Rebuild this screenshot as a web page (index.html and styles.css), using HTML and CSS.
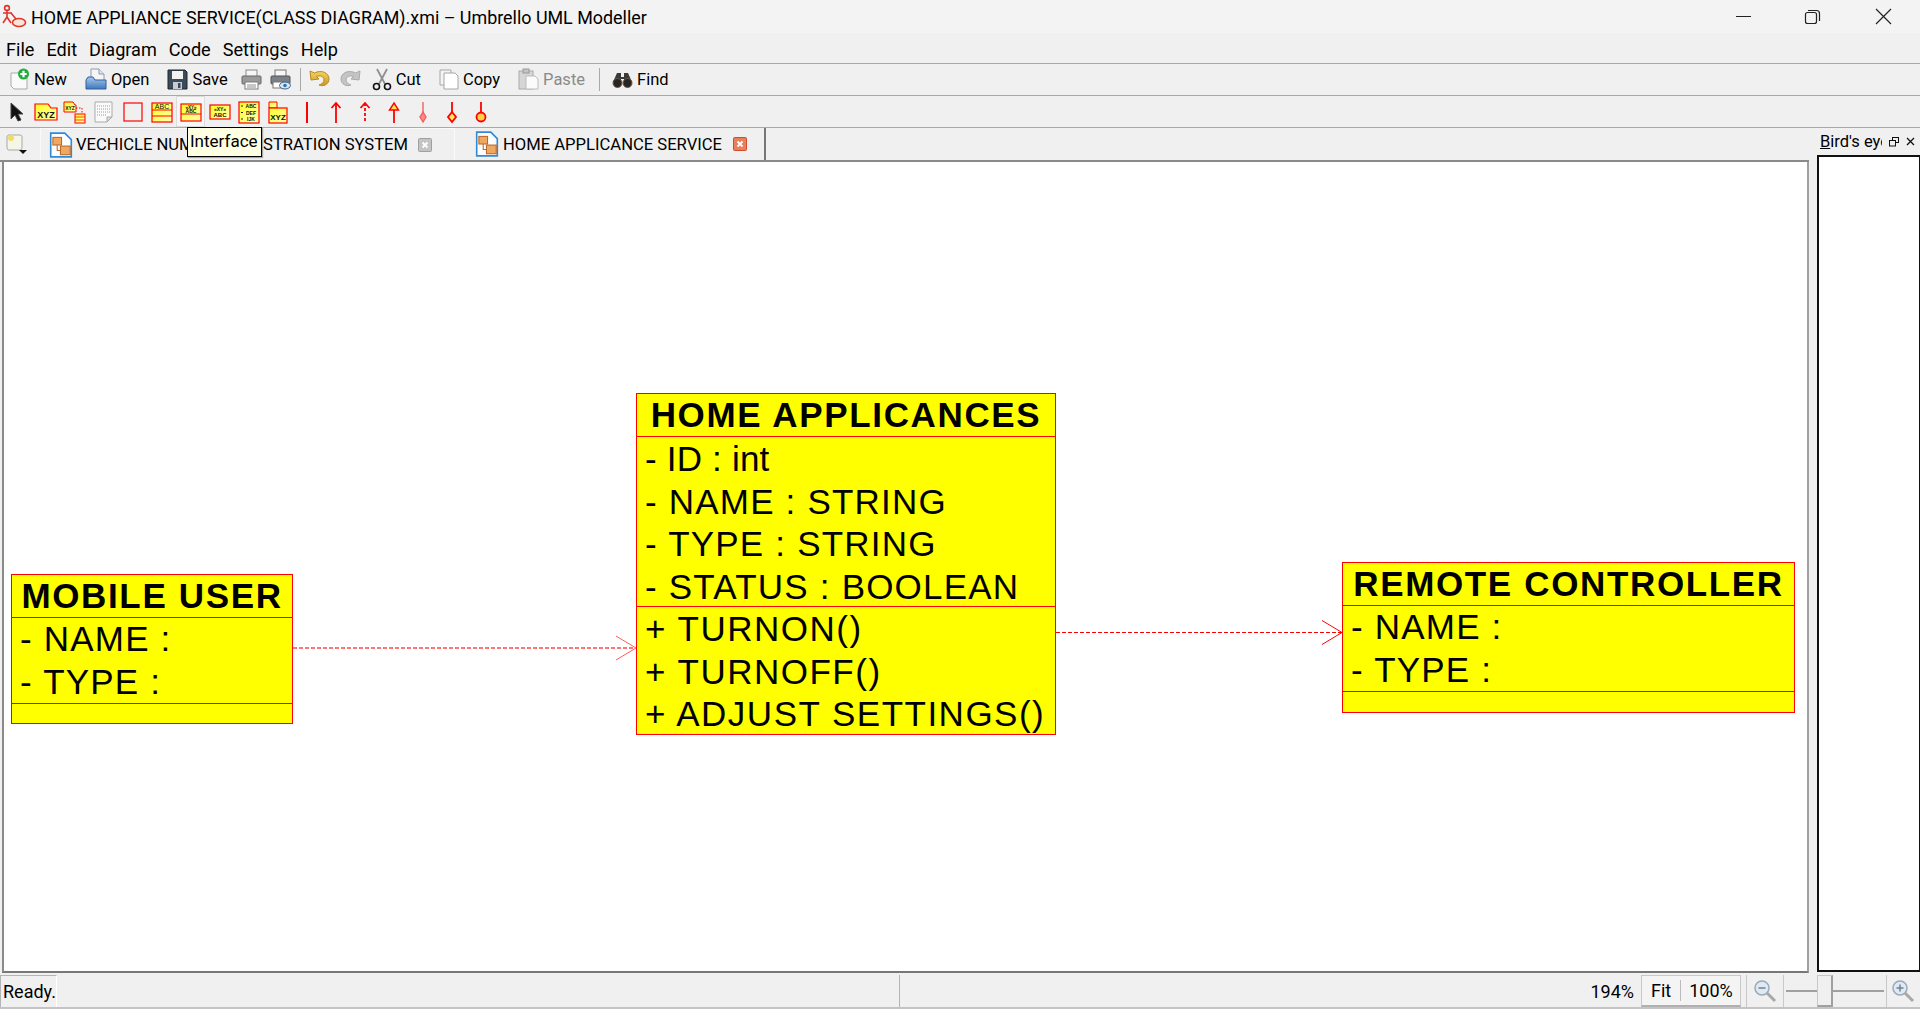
FILE: index.html
```html
<!DOCTYPE html>
<html lang="en">
<head>
  <meta charset="UTF-8">
  <title>HOME APPLIANCE SERVICE(CLASS DIAGRAM).xmi – Umbrello UML Modeller</title>
  <link rel="stylesheet" href="styles.css">
</head>
<body>

<svg class="defs" width="0" height="0">
  <defs>
    <linearGradient id="note" x1="0" y1="0" x2="1" y2="1">
      <stop offset="0" stop-color="#ffff20"/>
      <stop offset="1" stop-color="#ffffb0"/>
    </linearGradient>
    <linearGradient id="blue" x1="0" y1="0" x2="0" y2="1">
      <stop offset="0" stop-color="#a8c8ee"/>
      <stop offset="1" stop-color="#3f78bd"/>
    </linearGradient>
    <linearGradient id="gold" x1="0" y1="0" x2="0" y2="1">
      <stop offset="0" stop-color="#f6d65a"/>
      <stop offset="1" stop-color="#c9952a"/>
    </linearGradient>
  </defs>
</svg>

<div class="app">

  <div class="titlebar">
    <svg class="logo" width="26" height="26" viewBox="0 0 26 26" fill="none" stroke="#e0352b" stroke-width="1.6">
      <circle cx="6" cy="4" r="2.4"/>
      <path d="M6 6.5V13M2 9H11M6 13L2 19M6 13L10 19"/>
      <path d="M10 9L15 15"/>
      <ellipse cx="18" cy="18.500" rx="6.500" ry="4" fill="#fbe3d8"/>
    </svg>
    <span class="title">HOME APPLIANCE SERVICE(CLASS DIAGRAM).xmi – Umbrello UML Modeller</span>
    <div class="winbtns">
      <svg width="70" height="33" viewBox="0 0 70 33" stroke="#222" fill="none"><path d="M27 16.500H42"/></svg>
      <svg width="70" height="33" viewBox="0 0 70 33" stroke="#222" fill="none" stroke-width="1.2"><rect x="26.500" y="12.500" width="11" height="11" rx="2"/><path d="M29 10.500H37.500Q40.500 10.500 40.500 13.500V21"/></svg>
      <svg width="70" height="33" viewBox="0 0 70 33" stroke="#222" fill="none" stroke-width="1.2"><path d="M27 9L42 24M42 9L27 24"/></svg>
    </div>
  </div>

  <div class="menubar">
    <span>File</span><span>Edit</span><span>Diagram</span><span>Code</span><span>Settings</span><span>Help</span>
  </div>

  <!-- main toolbar -->
  <div class="toolbar">
    <div class="tool">
      <svg width="21" height="23" viewBox="0 0 21 23"><path d="M2 5H13L18 10V21H5L2 18Z" fill="#fafafa" stroke="#a9a9a9"/><circle cx="14.500" cy="6" r="5.500" fill="#1fae3a"/><path d="M14.500 2.800V9.200M11.300 6H17.700" stroke="#fff" stroke-width="2.200"/></svg>
      <span>New</span>
    </div>
    <div class="tool">
      <svg width="22" height="23" viewBox="0 0 22 23"><path d="M6 1H14L19 6V14H6Z" fill="#f5f5f5" stroke="#8c9bb0"/><path d="M14 1V6H19" fill="#dde3ea" stroke="#8c9bb0"/><path d="M1 12L3 9H8L10 12H21V21H1Z" fill="url(#blue)" stroke="#2f5f9c"/></svg>
      <span>Open</span>
    </div>
    <div class="tool">
      <svg width="21" height="23" viewBox="0 0 21 23"><path d="M1 2H18L20 4V21H1Z" fill="#3d4a5a" stroke="#1f2630"/><rect x="5" y="3" width="11" height="8" fill="#f2f2f2"/><rect x="6" y="14" width="9" height="7" fill="#c8ccd2"/><rect x="11" y="15" width="2.500" height="5" fill="#3d4a5a"/></svg>
      <span>Save</span>
    </div>
    <div class="tool icon-only">
      <svg width="21" height="23" viewBox="0 0 21 23"><rect x="5" y="2" width="11" height="7" fill="#f6f6f6" stroke="#8a8a8a"/><rect x="1" y="8" width="19" height="8" rx="1" fill="#9a9a9a" stroke="#666"/><rect x="4" y="14" width="13" height="7" fill="#fff" stroke="#7c7c7c"/><path d="M6 17H15M6 19H15" stroke="#8f8f8f"/></svg>
    </div>
    <div class="tool icon-only">
      <svg width="21" height="23" viewBox="0 0 21 23"><rect x="5" y="2" width="11" height="7" fill="#f6f6f6" stroke="#777"/><rect x="1" y="8" width="19" height="8" rx="1" fill="#7a8087" stroke="#555"/><rect x="3" y="14" width="11" height="6" fill="#fff" stroke="#777"/><ellipse cx="15" cy="17.500" rx="5.500" ry="3.500" fill="#d5e6f5" stroke="#41658a"/><circle cx="15" cy="17.500" r="1.800" fill="#2f74b5"/></svg>
    </div>
    <div class="sep"></div>
    <div class="tool icon-only">
      <svg width="22" height="23" viewBox="0 0 22 23"><path d="M1 3L2 12L10 11L7.500 8.500C11 7 15 8.500 15 12C15 14.500 13 16 10 17C14 19 20 16.500 20 11C20 4.500 12 1.500 5.500 5Z" fill="url(#gold)" stroke="#b88a1e"/></svg>
    </div>
    <div class="tool icon-only">
      <svg width="22" height="23" viewBox="0 0 22 23"><path d="M21 3L20 12L12 11L14.500 8.500C11 7 7 8.500 7 12C7 14.500 9 16 12 17C8 19 2 16.500 2 11C2 4.500 10 1.500 16.500 5Z" fill="#c4c4c4" stroke="#aaa"/></svg>
    </div>
    <div class="tool cut">
      <svg width="20" height="23" viewBox="0 0 20 23" fill="none"><path d="M5 1L13 16M15 1L7 16" stroke="#8f8f8f" stroke-width="1.800"/><circle cx="4.500" cy="18.500" r="3" stroke="#111" stroke-width="1.600"/><circle cx="15.500" cy="18.500" r="3" stroke="#111" stroke-width="1.600"/></svg>
      <span>Cut</span>
    </div>
    <div class="tool">
      <svg width="20" height="23" viewBox="0 0 20 23"><path d="M1 2H12V17H1Z" fill="#f4f4f4" stroke="#a6a6a6"/><path d="M5 5H16L19 8V21H5Z" fill="#fff" stroke="#a6a6a6"/></svg>
      <span>Copy</span>
    </div>
    <div class="tool disabled">
      <svg width="21" height="23" viewBox="0 0 21 23"><rect x="1" y="3" width="14" height="18" fill="#d6d6d6" stroke="#aaa"/><rect x="5" y="1" width="6" height="4" fill="#c4c4c4" stroke="#999"/><path d="M8 8H17L20 11V21H8Z" fill="#fbfbfb" stroke="#bbb"/></svg>
      <span>Paste</span>
    </div>
    <div class="sep"></div>
    <div class="tool find">
      <svg width="21" height="23" viewBox="0 0 21 23"><path d="M5 5H9V9H12V5H16L20 14L12 15V11H9V15L1 14Z" fill="#3a3a3a"/><circle cx="5.500" cy="15" r="4.500" fill="#2a2420" stroke="#6b5b4a"/><circle cx="15.500" cy="15" r="4.500" fill="#2a2420" stroke="#6b5b4a"/></svg>
      <span>Find</span>
    </div>
  </div>

  <!-- diagram widgets toolbar -->
  <div class="toolbar umlbar">
    <div class="ubtn"><svg width="22" height="24" viewBox="0 0 22 24"><path d="M5 3V19L9 15L12 21L15 20L12 14H17Z" fill="#111" stroke="#444"/></svg></div>
    <div class="ubtn"><svg width="24" height="24" viewBox="0 0 24 24"><path d="M1 4H14L17 8H23V20H1Z" fill="url(#note)" stroke="#f00" stroke-width="1.200"/><text x="12" y="18" class="ic-txt" font-size="9">XYZ</text></svg></div>
    <div class="ubtn"><svg width="24" height="24" viewBox="0 0 24 24" fill="none"><path d="M1 2H10L12 5H13V12H1Z" fill="url(#note)" stroke="#f00"/><text x="7" y="10" class="ic-txt" font-size="5">XYZ</text><path d="M13 8H19V13" stroke="#f00" stroke-dasharray="1.500 1.500"/><rect x="12" y="14" width="10" height="9" fill="url(#note)" stroke="#f00"/><path d="M12 17H22M12 20H22" stroke="#f00" stroke-width=".7"/></svg></div>
    <div class="ubtn"><svg width="22" height="24" viewBox="0 0 22 24"><path d="M2 2H19V17L14 22H2Z" fill="#fafafa" stroke="#aaa"/><path d="M14 22V17H19Z" fill="#ddd" stroke="#aaa"/><path d="M4 6H17M4 9H17M4 12H17M4 15H13" stroke="#8b9fc0" stroke-dasharray="1 1"/></svg></div>
    <div class="ubtn"><svg width="22" height="24" viewBox="0 0 22 24"><rect x="2" y="3" width="18" height="18" fill="#f0f0f0" stroke="#f00" stroke-width="1.200"/></svg></div>
    <div class="ubtn"><svg width="24" height="24" viewBox="0 0 24 24"><rect x="2" y="3" width="20" height="19" fill="url(#note)" stroke="#f00" stroke-width="1.200"/><path d="M2 10H22M2 16H22" stroke="#f00"/><text x="12" y="9" class="ic-txt thin" font-size="7">ABC</text></svg></div>
    <div class="ubtn hover"><svg width="24" height="24" viewBox="0 0 24 24"><rect x="2" y="4" width="20" height="17" fill="url(#note)" stroke="#f00" stroke-width="1.200"/><path d="M2 14H22" stroke="#f00"/><text x="12" y="8.500" class="ic-txt" font-size="4.500">«XY»</text><text x="12" y="13" class="ic-txt" font-size="5">ABC</text></svg></div>
    <div class="ubtn"><svg width="24" height="24" viewBox="0 0 24 24"><rect x="2" y="5" width="20" height="14" fill="url(#note)" stroke="#f00" stroke-width="1.200"/><text x="12" y="11" class="ic-txt" font-size="5">«XY»</text><text x="12" y="17" class="ic-txt" font-size="6">ABC</text></svg></div>
    <div class="ubtn"><svg width="24" height="24" viewBox="0 0 24 24"><rect x="2" y="2" width="20" height="21" fill="url(#note)" stroke="#f00" stroke-width="1.200"/><text x="14" y="8" class="ic-txt" font-size="5">ABC</text><text x="14" y="14.500" class="ic-txt" font-size="5">DEF</text><text x="14" y="21" class="ic-txt" font-size="5">IJK</text><path d="M4 6H6M4 12.500H6M4 19H6" stroke="#222"/></svg></div>
    <div class="ubtn"><svg width="24" height="24" viewBox="0 0 24 24"><path d="M3 2H11V8H3Z" fill="url(#note)" stroke="#f00"/><rect x="3" y="8" width="18" height="15" fill="url(#note)" stroke="#f00" stroke-width="1.200"/><text x="12" y="20" class="ic-txt" font-size="8">XYZ</text></svg></div>
    <div class="ubtn"><svg width="24" height="24" viewBox="0 0 24 24"><path d="M12 2V23" stroke="#f00" stroke-width="2"/></svg></div>
    <div class="ubtn"><svg width="24" height="24" viewBox="0 0 24 24" fill="none" stroke="#f00" stroke-width="1.800"><path d="M12 3V23M7.500 8L12 3L16.500 8"/></svg></div>
    <div class="ubtn"><svg width="24" height="24" viewBox="0 0 24 24" fill="none" stroke="#f00" stroke-width="1.800"><path d="M12 3V23" stroke-dasharray="3 2"/><path d="M7.500 8L12 3L16.500 8"/></svg></div>
    <div class="ubtn"><svg width="24" height="24" viewBox="0 0 24 24" stroke="#f00" stroke-width="1.800"><path d="M12 9V23"/><path d="M12 3L16.500 10H7.500Z" fill="#ffe94a" stroke-width="1.400"/></svg></div>
    <div class="ubtn"><svg width="24" height="24" viewBox="0 0 24 24" stroke="#f06060" stroke-width="1.400"><path d="M12 2V14"/><path d="M12 12L15 17L12 22L9 17Z" fill="#f88"/></svg></div>
    <div class="ubtn"><svg width="24" height="24" viewBox="0 0 24 24" stroke="#f00" stroke-width="1.800"><path d="M12 2V12"/><path d="M12 12L16 17L12 22L8 17Z" fill="#ffef60"/></svg></div>
    <div class="ubtn"><svg width="24" height="24" viewBox="0 0 24 24" stroke="#f00" stroke-width="1.800"><path d="M12 2V12"/><circle cx="12" cy="17" r="4.500" fill="#ffd24a"/></svg></div>
  </div>

  <div class="workspace">
    <div class="main">
      <div class="tabbar">
        <div class="tabmenu">
          <svg width="24" height="24" viewBox="0 0 24 24"><rect x="2" y="3" width="15" height="15" rx="2" fill="#f6f6e8" stroke="#a8a8a8"/><circle cx="6" cy="6" r="3" fill="#f0dc60"/><path d="M14 18H22L18 22Z" fill="#111"/></svg>
        </div>
        <div class="tab">
          <svg width="24" height="26" viewBox="2 1 21 24"><path d="M3 2H16L22 8V24H3Z" fill="#fff" stroke="#2f8bd8" stroke-width="1.500"/><rect x="5" y="6" width="8" height="7" fill="#f0a860" stroke="#b86a30"/><rect x="12" y="14" width="9" height="8" fill="#f0a860" stroke="#b86a30"/><path d="M9 13V18H12" fill="none" stroke="#b86a30"/></svg>
          <span>VECHICLE NUMBER REGISTRATION SYSTEM</span>
          <svg class="tab-x" width="14" height="14" viewBox="0 0 14 14"><rect x=".500" y=".500" width="13" height="13" rx="1" fill="#c4c4c4" stroke="#a0a0a0"/><path d="M4.500 4.500L9.500 9.500M9.500 4.500L4.500 9.500" stroke="#fff" stroke-width="1.800"/></svg>
        </div>
        <div class="tab current">
          <svg width="24" height="26" viewBox="2 1 21 24"><path d="M3 2H16L22 8V24H3Z" fill="#fff" stroke="#2f8bd8" stroke-width="1.500"/><rect x="5" y="6" width="8" height="7" fill="#f0a860" stroke="#b86a30"/><rect x="12" y="14" width="9" height="8" fill="#f0a860" stroke="#b86a30"/><path d="M9 13V18H12" fill="none" stroke="#b86a30"/></svg>
          <span>HOME APPLICANCE SERVICE</span>
          <svg class="tab-x" width="14" height="14" viewBox="0 0 14 14"><rect x=".500" y=".500" width="13" height="13" rx="1" fill="#e8805c" stroke="#d4482c"/><path d="M4.500 4.500L9.500 9.500M9.500 4.500L4.500 9.500" stroke="#fff" stroke-width="1.800"/></svg>
        </div>
      </div>

      <div class="canvas">
        <svg class="wires" width="1806" height="810" viewBox="0 0 1806 810" fill="none">
          <g stroke="#ff4a4a">
            <path d="M289 486H630" stroke-width="1.300" stroke-dasharray="4 2"/>
            <path d="M612 474L632 486L612 498" stroke-width=".9"/>
          </g>
          <g stroke="#ff0000">
            <path d="M1052 470.500H1338" stroke-dasharray="4 2"/>
            <path d="M1318 458.500L1338 470.500L1318 482.500"/>
          </g>
        </svg>

        <div class="uml mobile">
          <div class="uml-name">MOBILE USER</div>
          <div class="uml-attrs">
            <div>- NAME :</div>
            <div>- TYPE :</div>
          </div>
          <div class="uml-ops"></div>
        </div>

        <div class="uml home">
          <div class="uml-name">HOME APPLICANCES</div>
          <div class="uml-attrs">
            <div class="tight">- ID : int</div>
            <div>- NAME : STRING</div>
            <div>- TYPE : STRING</div>
            <div>- STATUS : BOOLEAN</div>
          </div>
          <div class="uml-ops">
            <div>+ TURNON()</div>
            <div>+ TURNOFF()</div>
            <div>+ ADJUST SETTINGS()</div>
          </div>
        </div>

        <div class="uml remote">
          <div class="uml-name">REMOTE CONTROLLER</div>
          <div class="uml-attrs">
            <div>- NAME :</div>
            <div>- TYPE :</div>
          </div>
          <div class="uml-ops"></div>
        </div>
      </div>
    </div>

    <div class="birdseye">
      <div class="dock-head">
        <span class="dock-title"><u>B</u>ird's eye view</span>
        <svg width="10" height="10" viewBox="0 0 10 10" fill="none" stroke="#111"><rect x="3.500" y=".500" width="6" height="5"/><rect x=".500" y="3.500" width="6" height="5.500" fill="#f0f0f0"/></svg>
        <svg width="10" height="10" viewBox="0 0 10 10" fill="none" stroke="#111" stroke-width="1.300"><path d="M1 1L8 8M8 1L1 8"/></svg>
      </div>
      <div class="dock-body"></div>
    </div>
  </div>

  <div class="statusbar">
    <div class="status-msg">Ready.</div>
    <div class="status-left"></div>
    <div class="status-zoom">194%</div>
    <div class="status-btns"><span>Fit</span><span>100%</span></div>
    <div class="status-cell first">
      <svg width="24" height="24" viewBox="0 0 24 24" fill="none"><path d="M14 14L22 22" stroke="#a8a8a8" stroke-width="3"/><circle cx="9" cy="9" r="7" fill="#dfe9f3" stroke="#9aa9b8" stroke-width="1.500"/><path d="M5.500 9H12.500" stroke="#6f8192" stroke-width="1.500"/></svg>
    </div>
    <div class="slider"><i class="slider-line"></i><i class="slider-knob"></i></div>
    <div class="status-cell">
      <svg width="24" height="24" viewBox="0 0 24 24" fill="none"><path d="M14 14L22 22" stroke="#a8a8a8" stroke-width="3"/><circle cx="9" cy="9" r="7" fill="#dfe9f3" stroke="#9aa9b8" stroke-width="1.500"/><path d="M5.500 9H12.500M9 5.500V12.500" stroke="#6f8192" stroke-width="1.500"/></svg>
    </div>
  </div>

  <div class="tooltip">Interface</div>
</div>

</body>
</html>
```

FILE: styles.css
```css
* {
  box-sizing: border-box;
}
html, body {
  margin: 0;
  padding: 0;
  overflow: hidden;
}
body {
  font-family: Roboto, "Noto Sans", sans-serif;
  font-size: 16.5px;
  color: #000;
  background-color: #f0f0f0;
}
.defs {
  position: absolute;
}
.app {
  position: relative;
  display: flex;
  flex-direction: column;
  width: 1920px;
  height: 1009px;
}
svg {
  display: block;
  flex: none;
}

/* title bar */
.titlebar {
  display: flex;
  align-items: center;
  height: 33px;
  padding-left: 1px;
  background-color: #f3f3f3;
}
.title {
  margin: 1px 0 0 4px;
  font-size: 17.9px;
}
.winbtns {
  display: flex;
  margin-left: auto;
  margin-right: 1px;
}

/* menu */
.menubar {
  display: flex;
  align-items: center;
  gap: 12px;
  height: 30px;
  padding: 2px 0 0 6px;
  font-size: 18.1px;
}

/* toolbars */
.toolbar {
  display: flex;
  align-items: center;
  gap: 1px;
  height: 32px;
  padding-left: 1px;
  border-top: 1px solid #a9a9a9;
}
.tool {
  display: flex;
  align-items: center;
  gap: 4px;
  padding: 0 9px 0 8px;
}
.tool.icon-only {
  padding: 0 3.5px;
}
.tool.cut {
  padding-left: 6px;
}
.tool.find {
  padding-left: 7px;
}
.tool.disabled {
  color: #8a8a8a;
}
.sep {
  width: 1px;
  height: 23px;
  margin: 0 4px;
  background-color: #a9a9a9;
}
.umlbar {
  gap: 0;
  padding-left: 2px;
}
.ubtn {
  display: flex;
  align-items: center;
  justify-content: center;
  width: 29px;
  height: 31px;
}
.ubtn.hover {
  background-color: #f6f6f6;
  border: 1px solid #dcdcdc;
}
.ic-txt {
  font-family: "Liberation Sans", sans-serif;
  font-weight: bold;
  text-anchor: middle;
  fill: #111;
}
.ic-txt.thin {
  font-weight: normal;
}

/* workspace */
.workspace {
  display: flex;
  flex: 1;
  min-height: 0;
  border-top: 1px solid #a9a9a9;
}
.main {
  display: flex;
  flex-direction: column;
  width: 1809px;
}
.tabbar {
  display: flex;
  height: 34px;
  border-bottom: 2px solid #8a8a8a;
}
.tabmenu {
  display: flex;
  align-items: center;
  width: 40px;
  padding-left: 5px;
}
.tab {
  display: flex;
  align-items: center;
  width: 415px;
  height: 32px;
  padding-left: 8px;
  gap: 3px;
  font-size: 16.6px;
  border: 1px solid #fafafa;
  border-bottom: 0;
}
.tab-x {
  margin-left: 7px;
}
.tab.current {
  width: 310px;
  padding-left: 19px;
  gap: 4px;
  border: 0;
  border-right: 2px solid #777;
  margin-left: 1px;
}
.canvas {
  position: relative;
  flex: 1;
  margin-left: 2px;
  background-color: #fff;
  border-left: 2px solid #8a8a8a;
  border-right: 2px solid #a0a0a0;
  border-bottom: 2px solid #777;
}
.wires {
  position: absolute;
  left: 0;
  top: 0;
}

/* class widgets on the diagram, placed freely */
.uml {
  position: absolute;
  display: flex;
  flex-direction: column;
  background-color: #ffff00;
  border: 1px solid #ff0000;
  font-family: "Liberation Sans", Arial, sans-serif;
  font-size: 35px;
  letter-spacing: 1.2px;
  line-height: 42.7px;
  white-space: nowrap;
}
.uml-name {
  height: 43px;
  font-weight: bold;
  letter-spacing: 1.65px;
  text-align: center;
  border-bottom: 1px solid #ff0000;
}
.uml-attrs {
  padding-left: 8px;
  border-bottom: 1px solid #ff0000;
}
.tight {
  letter-spacing: 0.2px;
}
.uml-ops {
  flex: 1;
  padding-left: 8px;
  letter-spacing: 1.5px;
}
.mobile {
  left: 7px;
  top: 412px;
  width: 282px;
  height: 150px;
}
.home {
  left: 632px;
  top: 231px;
  width: 420px;
  height: 342px;
}
.home .uml-attrs {
  height: 170px;
  padding-top: 1px;
}
.home .uml-ops {
  padding-top: 1px;
}
.remote {
  left: 1338px;
  top: 400px;
  width: 453px;
  height: 151px;
}

/* bird's eye dock */
.birdseye {
  display: flex;
  flex-direction: column;
  width: 111px;
  padding-left: 8px;
}
.dock-head {
  display: flex;
  align-items: center;
  gap: 7px;
  height: 27px;
  padding-left: 3px;
}
.dock-title {
  width: 62px;
  overflow: hidden;
  white-space: nowrap;
}
.dock-body {
  flex: 1;
  background-color: #fff;
  border: 2px solid #111;
  border-right-width: 1px;
  margin-bottom: 1px;
}

/* status bar */
.statusbar {
  display: flex;
  align-items: stretch;
  height: 36px;
  border-bottom: 2px solid #c4c4c4;
  padding-top: 2px;
  font-size: 18px;
}
.status-msg {
  display: flex;
  align-items: center;
  width: 57px;
  padding-left: 2px;
  border-left: 1px solid #b4b4b4;
  border-top: 1px solid #b4b4b4;
  border-right: 1px solid #fff;
}
.status-left {
  width: 843px;
  border-right: 1px solid #b4b4b4;
}
.status-zoom {
  display: flex;
  align-items: center;
  justify-content: flex-end;
  width: 741px;
  padding-right: 7px;
}
.status-btns {
  display: flex;
  align-items: center;
  width: 100px;
  background-color: #f4f4f4;
  border: 1px solid #c8c8c8;
  border-bottom: 2px solid #b0b0b0;
}
.status-btns span {
  padding: 0 9px;
}
.status-btns span + span {
  border-left: 1px solid #bbb;
  padding: 0 7px 0 8px;
}
.status-cell {
  display: flex;
  align-items: center;
  justify-content: center;
  width: 32px;
  border-left: 1px solid #c8c8c8;
}
.status-cell.first {
  width: 37px;
  margin-left: 5px;
}
.slider {
  position: relative;
  width: 103px;
  border-left: 1px solid #c8c8c8;
}
.slider-line {
  position: absolute;
  left: 2px;
  right: 2px;
  top: 15px;
  height: 2px;
  background-color: #a0a0a0;
}
.slider-knob {
  position: absolute;
  left: 33px;
  top: 0;
  width: 16px;
  bottom: 0;
  background-color: #f0f0f0;
  border: 1px solid #c8c8c8;
  border-right: 2px solid #a0a0a0;
  border-bottom: 2px solid #a0a0a0;
}

/* hover hint over the tab */
.tooltip {
  position: absolute;
  left: 187px;
  top: 127px;
  width: 75px;
  height: 30px;
  padding-left: 2px;
  background-color: #ffffe1;
  border: 1px solid #000;
  font-size: 17px;
  line-height: 27px;
  box-shadow: 1px 1px 1px rgba(0, 0, 0, 0.3);
}
```
